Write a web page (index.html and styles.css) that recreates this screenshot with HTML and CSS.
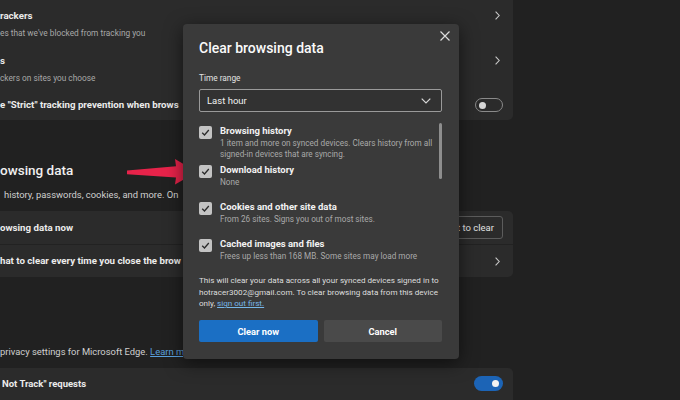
FILE: index.html
```html
<!DOCTYPE html>
<html lang="en">
<head>
<meta charset="utf-8">
<title>Clear browsing data</title>
<link rel="stylesheet" href="styles.css">
</head>
<body>
<div class="page">
  <div class="card card-top">
    <div class="row row-1">
      <div class="txt"><div class="t">rackers</div><div class="d">es that we've blocked from tracking you</div></div>
      <svg class="chev" viewBox="0 0 5 9" width="5" height="9"><path d="M0.6 0.6 L4.2 4.5 L0.6 8.4" fill="none" stroke="#c9c9c9" stroke-width="1.1"/></svg>
    </div>
    <div class="row row-2">
      <div class="txt"><div class="t">s</div><div class="d">ckers on sites you choose</div></div>
      <svg class="chev" viewBox="0 0 5 9" width="5" height="9"><path d="M0.6 0.6 L4.2 4.5 L0.6 8.4" fill="none" stroke="#c9c9c9" stroke-width="1.1"/></svg>
    </div>
    <div class="row row-3">
      <div class="txt"><div class="t clip">e "Strict" tracking prevention when brows</div></div>
      <div class="toggle off"><span class="knob"></span></div>
    </div>
  </div>

  <div class="section-head">
    <div class="h">owsing data</div>
    <div class="sd clip">history, passwords, cookies, and more. On</div>
  </div>

  <div class="card card-mid">
    <div class="row row-a">
      <div class="txt"><div class="t">owsing data now</div></div>
      <button class="btn-outline">Choose what to clear</button>
    </div>
    <div class="row row-b">
      <div class="txt"><div class="t clip">hat to clear every time you close the brow</div></div>
      <svg class="chev" viewBox="0 0 5 9" width="5" height="9"><path d="M0.6 0.6 L4.2 4.5 L0.6 8.4" fill="none" stroke="#c9c9c9" stroke-width="1.1"/></svg>
    </div>
  </div>

  <div class="section-privacy">
    <div class="sd clip">privacy settings for Microsoft Edge. <a class="link" href="#">Learn m</a></div>
  </div>

  <div class="card card-bottom">
    <div class="row row-c">
      <div class="txt"><div class="t">Not Track" requests</div></div>
      <div class="toggle on"><span class="knob"></span></div>
    </div>
  </div>
</div>

<svg class="arrow" viewBox="120 150 85 45" width="85" height="45">
  <polygon points="127,170.6 176,166.2 175,159 197,172 175,184.5 176,177.5 127,174.2" fill="#e7234a"/>
</svg>

<div class="dialog">
  <div class="dialog-head">
    <div class="dialog-title">Clear browsing data</div>
    <svg class="close" viewBox="0 0 10 10" width="10" height="10"><path d="M0.5 0.5 L9.5 9.5 M9.5 0.5 L0.5 9.5" stroke="#dcdcdc" stroke-width="1.2" fill="none"/></svg>
  </div>
  <div class="label">Time range</div>
  <div class="select">
    <span>Last hour</span>
    <svg viewBox="0 0 10 6" width="10" height="6"><path d="M0.7 0.7 L5 5 L9.3 0.7" fill="none" stroke="#d8d8d8" stroke-width="1.2"/></svg>
  </div>
  <div class="list">
    <div class="items">
      <div class="item">
        <span class="cb"><svg viewBox="0 0 13 13" width="13" height="13"><path d="M3.2 6.8 L5.5 9 L9.8 4" fill="none" stroke="#2a2a2a" stroke-width="1.3"/></svg></span>
        <div class="it-body"><div class="it">Browsing history</div><div class="id">1 item and more on synced devices. Clears history from all signed-in devices that are syncing.</div></div>
      </div>
      <div class="item">
        <span class="cb"><svg viewBox="0 0 13 13" width="13" height="13"><path d="M3.2 6.8 L5.5 9 L9.8 4" fill="none" stroke="#2a2a2a" stroke-width="1.3"/></svg></span>
        <div class="it-body"><div class="it">Download history</div><div class="id">None</div></div>
      </div>
      <div class="item">
        <span class="cb"><svg viewBox="0 0 13 13" width="13" height="13"><path d="M3.2 6.8 L5.5 9 L9.8 4" fill="none" stroke="#2a2a2a" stroke-width="1.3"/></svg></span>
        <div class="it-body"><div class="it">Cookies and other site data</div><div class="id">From 26 sites. Signs you out of most sites.</div></div>
      </div>
      <div class="item">
        <span class="cb"><svg viewBox="0 0 13 13" width="13" height="13"><path d="M3.2 6.8 L5.5 9 L9.8 4" fill="none" stroke="#2a2a2a" stroke-width="1.3"/></svg></span>
        <div class="it-body"><div class="it">Cached images and files</div><div class="id">Frees up less than 168 MB. Some sites may load more</div></div>
      </div>
    </div>
    <div class="scroll"><div class="thumb"></div></div>
  </div>
  <p class="note">This will clear your data across all your synced devices signed in to hotracer3002@gmail.com. To clear browsing data from this device only, <a class="note-link" href="#">sign out first.</a></p>
  <div class="btns">
    <button class="btn primary">Clear now</button>
    <button class="btn secondary">Cancel</button>
  </div>
</div>
</body>
</html>
```

FILE: styles.css
```css
* { box-sizing: border-box; margin: 0; padding: 0; }
html, body { width: 680px; height: 400px; overflow: hidden; }
body {
  background: #212121;
  font-family: Roboto, "Segoe UI", Arial, sans-serif;
  color: #e8e8e8;
  position: relative;
}

.page { width: 513px; display: flex; flex-direction: column; }

.card { background: #2b2b2b; }
.card-top { border-bottom-right-radius: 5px; }
.card-mid { border-top-right-radius: 5px; border-bottom-right-radius: 5px; margin-top: 10px; }
.card-bottom { border-top-right-radius: 5px; margin-top: 10px; height: 40px; }

.row { display: flex; }
.txt { flex: 1; min-width: 0; white-space: nowrap; overflow: hidden; }
.clip { max-width: 183px; overflow: hidden; white-space: nowrap; }
.t { font-weight: 700; font-size: 9.7px; line-height: 14px; color: #ececec; }
.d { font-size: 8.3px; line-height: 13px; color: #a8a8a8; margin-top: 4px; }

.row-1, .row-2 { height: 45px; padding: 9px 13px 0 0; align-items: flex-start; }
.row-1 .chev, .row-2 .chev { margin-top: 2px; flex: none; }
.row-3 { height: 30px; padding: 0 10px 0 0; align-items: center; }

.toggle { flex: none; border-radius: 8px; position: relative; }
.toggle.off { width: 28px; height: 14px; border: 1px solid #8a8a8a; }
.toggle.off .knob { position: absolute; left: 3px; top: 2.5px; width: 7px; height: 7px; border-radius: 50%; background: #d6d6d6; }
.toggle.on { width: 29px; height: 15px; background: #1c64b6; }
.toggle.on .knob { position: absolute; right: 4px; top: 4px; width: 7px; height: 7px; border-radius: 50%; background: #f2f2f2; }

.section-head { margin-top: 39px; white-space: nowrap; overflow: hidden; }
.h { font-size: 13.5px; font-weight: 500; line-height: 22px; color: #f0f0f0; }
.sd { font-size: 9.4px; line-height: 13px; color: #d0d0d0; }
.section-head .sd { margin-top: 7px; padding-left: 4px; }

.row-a { height: 33px; align-items: center; padding-right: 10px; }
.btn-outline {
  flex: none; height: 23px; padding: 0 8px;
  background: #2b2b2b; border: 1px solid #5c5c5c; border-radius: 3px;
  font-family: inherit; font-size: 9.5px; color: #e2e2e2;
}
.row-b { height: 33px; align-items: center; padding-right: 13px; border-top: 1px solid #222; }
.row-b .chev { flex: none; }

.section-privacy { margin-top: 68px; }
.link { color: #5aa0de; text-decoration: underline; }

.row-c { height: 31px; padding: 8px 10px 0 2px; align-items: flex-start; }
.row-c .t { margin-top: 1px; font-size: 9.5px; }

.arrow { position: absolute; left: 120px; top: 150px; }

.dialog {
  position: absolute; left: 183px; top: 24px;
  width: 276px; height: 335px;
  background: #3a3a3a; border-radius: 4px;
  padding: 14px 17px 17px 16px;
  display: flex; flex-direction: column;
  box-shadow: 0 4px 18px rgba(0,0,0,0.55);
}
.dialog-head { display: flex; justify-content: space-between; align-items: flex-start; }
.dialog-title { font-size: 14px; font-weight: 500; line-height: 20px; color: #fafafa; }
.close { margin-top: -7px; margin-right: -8px; flex: none; }
.label { margin-top: 14px; font-size: 8.3px; line-height: 12px; color: #e2e2e2; }
.select {
  margin-top: 5px; height: 23px;
  border: 1px solid #9a9a9a; border-radius: 2px; background: #323232;
  display: flex; align-items: center; justify-content: space-between;
  padding: 0 10px 0 7px;
  font-size: 9.5px; color: #f0f0f0;
}
.list { margin-top: 11px; height: 143px; display: flex; gap: 3px; overflow: hidden; }
.items { flex: 1; padding-top: 1px; }
.item { display: flex; gap: 8px; min-height: 37px; padding-bottom: 3px; }
.cb { flex: none; width: 13px; height: 13px; margin-top: 2px; background: #c3c3c3; border-radius: 2px; display: flex; }
.it-body { flex: 1; min-width: 0; }
.it { font-weight: 700; font-size: 9.5px; line-height: 14px; color: #f2f2f2; }
.id { font-size: 8.2px; line-height: 11px; color: #a9a9a9; }
.scroll { width: 3px; flex: none; }
.thumb { height: 56px; background: #8e8e8e; border-radius: 2px; }
.note { margin-top: 9px; font-size: 8.1px; line-height: 11.5px; color: #dedede; }
.note-link { display: inline-block; color: #76b7ea; text-decoration: underline; }
.btns { margin-top: 10.5px; display: grid; grid-template-columns: 1fr 1fr; gap: 6px; }
.btn { height: 22px; border: 0; border-radius: 2px; font-family: inherit; font-weight: 700; font-size: 9.3px; color: #fff; }
.primary { background: #1b6fc4; }
.secondary { background: #4a4a4a; }
```
